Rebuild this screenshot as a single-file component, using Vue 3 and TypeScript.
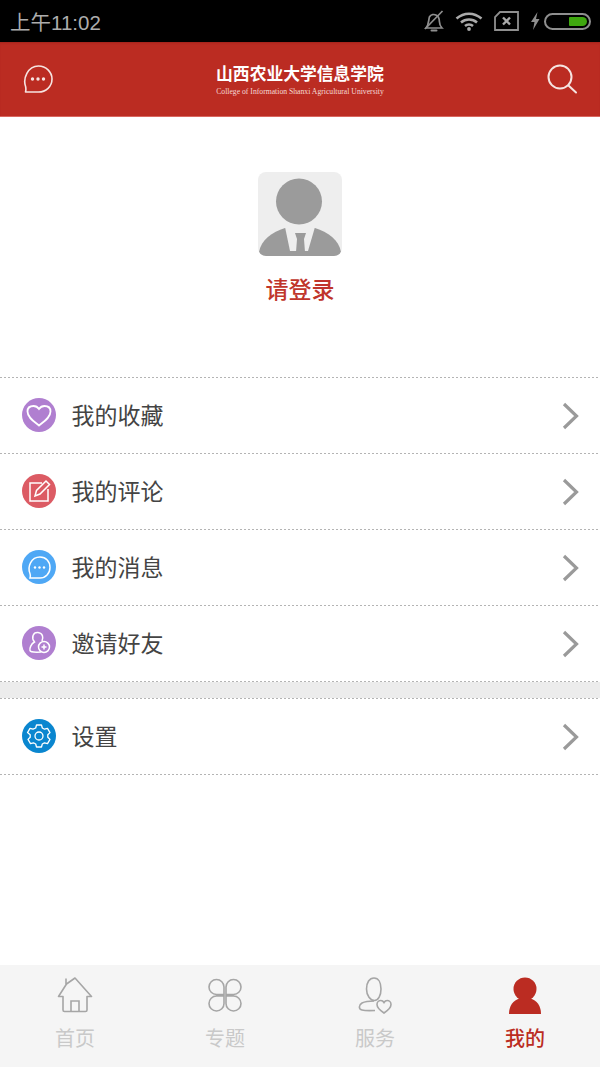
<script setup lang="ts">
interface Row { label: string; bg: string; icon: string }
const groups: Row[][] = [
  [
    { label: '我的收藏', bg: '#b07fd0', icon: 'heart' },
    { label: '我的评论', bg: '#dc5b64', icon: 'edit' },
    { label: '我的消息', bg: '#4fa8f5', icon: 'chat' },
    { label: '邀请好友', bg: '#b07fd0', icon: 'invite' },
  ],
  [{ label: '设置', bg: '#0a86cf', icon: 'gear' }],
]
const tabs = [
  { label: '首页', icon: 'home', active: false },
  { label: '专题', icon: 'clover', active: false },
  { label: '服务', icon: 'service', active: false },
  { label: '我的', icon: 'me', active: true },
]
</script>

<template>
  <div class="page">
    <div class="status">
      <span class="time">上午11:02</span>
      <div class="status-icons">
        <svg width="20" height="22" viewBox="0 0 20 22" fill="none" stroke="#8f8f8f" stroke-width="1.700">
          <path d="M2 18h16c-2-2-2.500-3-2.600-6.500-.1-3-.4-5-3-6.300C10 4 7 4.300 5.500 6.800 4.500 9.500 5 14.500 2 18z" />
          <path d="M7.500 20.500h5" stroke-linecap="round" stroke-width="2" />
          <path d="M1 19 18.500 1" />
        </svg>
        <svg class="wifi" width="28" height="20" viewBox="0 0 28 20" fill="none" stroke="#aaa" stroke-width="2.500">
          <path d="M1.500 7.500C9 1 19 1 26.500 7.500" />
          <path d="M6 11.500c4.500-4 11.500-4 16 0" />
          <path d="M10 15c2.200-2 5.800-2 8 0" />
          <circle cx="14" cy="18" r="1.900" fill="#aaa" stroke="none" />
        </svg>
        <svg class="sim" width="25" height="20" viewBox="0 0 25 20" fill="none" stroke="#8f8f8f" stroke-width="1.800">
          <path d="M6 1h18v18H1V6z" />
          <path d="M9 6.500l7 7M16 6.500l-7 7" stroke="#aaa" stroke-width="2.400" />
        </svg>
        <svg class="bolt" width="10" height="18" viewBox="0 0 10 18">
          <path d="M7.500 0 1 10h3.500L3 18l6.500-11H6z" fill="#8f8f8f" />
        </svg>
        <div class="battery"><span class="level"></span></div>
      </div>
    </div>

    <header class="head">
      <svg width="30" height="30" viewBox="0 0 30 30" fill="none" stroke="#f6e4e1" stroke-width="1.600">
        <path d="M2.500 28c.6-2 .4-4 .1-5.500C-.2 15 4.500 2 15.500 2 23 2 29 8 29 15c0 7.500-6 13-13.500 13z" stroke-linejoin="round" />
        <circle cx="9.500" cy="15" r="1.700" fill="#f6e4e1" stroke="none" />
        <circle cx="15" cy="15" r="1.700" fill="#f6e4e1" stroke="none" />
        <circle cx="20.500" cy="15" r="1.700" fill="#f6e4e1" stroke="none" />
      </svg>
      <div class="logo">
        <div class="logo-cn">山西农业大学信息学院</div>
        <div class="logo-en">College of Information Shanxi Agricultural University</div>
      </div>
      <svg width="30" height="30" viewBox="0 0 30 30" fill="none" stroke="#f6e4e1" stroke-width="2">
        <circle cx="13" cy="13" r="11.500" />
        <path d="M21.500 21.500 29 28.500" stroke-linecap="round" />
      </svg>
    </header>

    <section class="profile">
      <div class="avatar">
        <svg width="84" height="84" viewBox="0 0 84 84">
          <circle cx="41" cy="29.500" r="23" fill="#9b9b9b" />
          <path d="M1 80C3 68 14 60 27 56H57C70 60 81 68 83 80Q83 84 78 84H6Q1 84 1 80z" fill="#9b9b9b" />
          <path d="M27 55 32 79H50L57 55z" fill="#eeeeee" />
          <path d="M37 61H48L46 67 47 80H38L39 67z" fill="#9b9b9b" />
        </svg>
      </div>
      <div class="login">请登录</div>
    </section>

    <template v-for="(group, gi) in groups" :key="gi">
      <div v-if="gi > 0" class="band"></div>
      <ul class="list">
        <li v-for="r in group" :key="r.label" class="row">
          <span class="dot" :style="{ background: r.bg }">
            <svg width="34" height="34" viewBox="0 0 34 34" fill="none" stroke="#fff" stroke-width="1.500">
              <path v-if="r.icon === 'heart'" stroke-width="1.800" d="M17 27.500C12 23.500 5.500 19.500 5.500 13.500 5.500 10 8 8 11.500 8c2.300 0 4.300 1.200 5.500 3 1.200-1.800 3.200-3 5.500-3 3.500 0 6 2 6 5.500 0 6-6.500 10-11.500 14z" />
              <template v-else-if="r.icon === 'edit'">
                <path d="M20 9H8v18h18V15" />
                <path d="M13 22l1.500-5.500L24 7l3.500 3.500-9.500 9.500z" />
              </template>
              <template v-else-if="r.icon === 'chat'">
                <path d="M8 28c.5-1.500.4-3 .1-4C5 17 9 7 18 7c6 0 10 4.500 10 10.500S23.500 28 18 28z" />
                <circle cx="13" cy="17.500" r="1.200" fill="#fff" stroke="none" />
                <circle cx="17.500" cy="17.500" r="1.200" fill="#fff" stroke="none" />
                <circle cx="22" cy="17.500" r="1.200" fill="#fff" stroke="none" />
              </template>
              <template v-else-if="r.icon === 'invite'">
                <path d="M20 15c1.500-3 1-8-4-8.500-5-.4-7 5-3.500 9.500C9 18 7.500 22 8 24.500c.3 1.500 3 2 11 1.500" />
                <circle cx="22" cy="21" r="5.500" />
                <path d="M19.500 21h5M22 18.500v5" />
              </template>
              <template v-else>
                <circle cx="17" cy="17" r="4" stroke-width="1.300" />
                <path stroke-width="1.300" d="M14.500 6h5l.8 3 2.200 1.200 3-.9 2.500 4.300-2.200 2.200v2.400l2.200 2.200-2.500 4.300-3-.9-2.200 1.200-.8 3h-5l-.8-3-2.200-1.200-3 .9-2.500-4.300 2.200-2.200v-2.400L5.500 13.600 8 9.300l3 .9 2.700-1.200z" stroke-linejoin="round" />
              </template>
            </svg>
          </span>
          <span class="label">{{ r.label }}</span>
          <svg class="chev" width="17" height="28" viewBox="0 0 17 28" fill="none" stroke="#9a9a9a" stroke-width="3.200">
            <path d="M2 2l12.500 12L2 26" />
          </svg>
        </li>
      </ul>
    </template>

    <div class="spacer"></div>

    <nav class="tabs">
      <div v-for="t in tabs" :key="t.label" class="tab" :class="{ active: t.active }">
        <svg width="38" height="38" viewBox="0 0 38 38" fill="none" stroke="#a6a6a6" stroke-width="1.600">
          <template v-if="t.icon === 'home'">
            <path d="M10 8V1.500M10.500 7 19 1l16.500 18.500H31V33c0 1-.7 1.500-1.500 1.500h-21C7.500 34.500 7 34 7 33V19.500H2.500z" stroke-linejoin="round" />
            <path d="M15 34V24h8v10" />
          </template>
          <template v-else-if="t.icon === 'clover'">
            <path d="M18 17.500H10.500A7.500 7.500 0 1 1 18 10zM20 17.500h7.500A7.500 7.500 0 1 0 20 10zM18 19H10.500A7.500 7.500 0 1 0 18 26.500zM20 19h7.500A7.500 7.500 0 1 1 20 26.500z" />
          </template>
          <template v-else-if="t.icon === 'service'">
            <path d="M18 24c-4 0-9 .5-12 2-3.500 2-3.500 6 0 7 2.500.7 8 .7 13 .5" />
            <path d="M18.500 23.500c3.800 0 6.500-5 6.500-11.500S22.500 1 18 1s-7.500 4.500-7.500 11 4 11.500 8 11.500z" />
            <path d="M28 36c-3-2-7-5-7-8.500 0-2.500 2-4 3.800-4 1.500 0 2.500.8 3.200 2 .7-1.200 1.700-2 3.200-2 1.800 0 3.800 1.500 3.800 4 0 3.500-4 6.500-7 8.500z" />
          </template>
          <template v-else>
            <circle cx="19" cy="12" r="11.500" fill="#bb2c22" stroke="none" />
            <path d="M3 37c0-8 4-14 11-15.500h10c7 1.500 11 7.500 11 15.500z" fill="#bb2c22" stroke="none" />
          </template>
        </svg>
        <span class="tab-label">{{ t.label }}</span>
      </div>
    </nav>
  </div>
</template>

<style>
html, body { margin: 0; padding: 0; background: #fff; }
</style>

<style scoped>
.page {
  width: 600px;
  height: 1067px;
  display: flex;
  flex-direction: column;
  overflow: hidden;
  background: #fff;
  font-family: "Liberation Sans", "Noto Sans CJK SC", sans-serif;
}
.status {
  height: 42px;
  flex: none;
  background: #000;
  display: flex;
  align-items: center;
  justify-content: space-between;
  padding: 0 9px 0 10px;
  box-sizing: border-box;
}
.time { color: #adadad; font-size: 20.500px; }
.status-icons { display: flex; align-items: center; }
.wifi, .sim, .bolt { margin-left: 11px; }
.battery {
  margin-left: 4px;
  width: 47px;
  height: 17px;
  box-sizing: border-box;
  border: 2px solid #8f8f8f;
  border-radius: 9px;
  padding: 2px 2px;
  display: flex;
  justify-content: flex-end;
}
.level { width: 18px; height: 100%; background: #3fa70f; border-radius: 1px 5px 5px 1px; }
.head {
  height: 75px;
  flex: none;
  box-sizing: border-box;
  background: #bb2c22;
  border-bottom: 1px solid #d9675f;
  box-shadow: inset 0 2px 2px -1px #a3241b;
  display: flex;
  align-items: center;
  justify-content: space-between;
  padding: 0 23px;
}
.logo { display: flex; flex-direction: column; align-items: center; color: #fff; }
.logo-cn {
  font-family: "Noto Sans CJK SC", sans-serif;
  font-size: 16.800px;
  font-weight: 700;
  line-height: 22px;
  white-space: nowrap;
}
.logo-en {
  margin-top: 2px;
  font-family: "Liberation Serif", serif;
  font-size: 7.700px;
  line-height: 11px;
  color: #f4d9d6;
  white-space: nowrap;
}
.profile {
  height: 260px;
  flex: none;
  box-sizing: border-box;
  padding-top: 55px;
  display: flex;
  flex-direction: column;
  align-items: center;
}
.avatar {
  width: 84px;
  height: 84px;
  border-radius: 8px;
  overflow: hidden;
  background: #eeeeee;
}
.login {
  margin-top: 18px;
  font-size: 23px;
  line-height: 32px;
  color: #c0352b;
  font-weight: 500;
}
.list {
  list-style: none;
  margin: 0;
  padding: 1px 0 0;
  flex: none;
  background: linear-gradient(to right, #b4b4b4 50%, transparent 50%) 0 0 / 4px 1px repeat-x;
}
.row {
  height: 76px;
  box-sizing: border-box;
  padding: 0 21px 3px 22px;
  background: linear-gradient(to right, #b4b4b4 50%, transparent 50%) 0 100% / 4px 1px repeat-x;
  display: flex;
  align-items: center;
}
.dot {
  width: 34px;
  height: 34px;
  border-radius: 50%;
  flex: none;
  display: block;
}
.dot svg { display: block; }
.label {
  margin: 0 0 2px 15.500px;
  font-size: 23px;
  color: #444;
  flex: 1;
}
.chev { flex: none; margin-top: 2px; }
.band { height: 16px; flex: none; background: #ececec; }
.spacer { flex: 1; }
.tabs {
  height: 102px;
  flex: none;
  background: #f5f5f5;
  display: grid;
  grid-template-columns: repeat(4, 1fr);
}
.tab {
  display: flex;
  flex-direction: column;
  align-items: center;
  padding-top: 12px;
}
.tab svg { display: block; }
.tab-label { margin-top: 10px; font-size: 20px; line-height: 28px; color: #c9c9c9; }
.tab.active .tab-label { color: #bb2c22; font-weight: 500; }
</style>
